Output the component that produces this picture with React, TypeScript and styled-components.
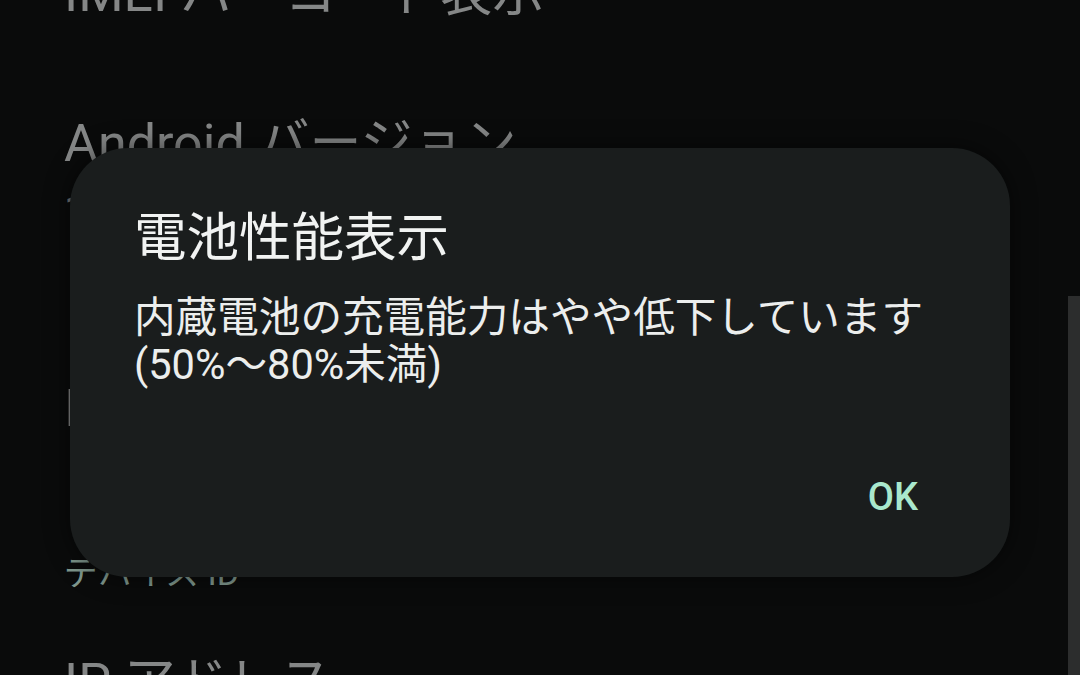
import styled, { createGlobalStyle } from 'styled-components';

const GlobalStyle = createGlobalStyle`
  html, body {
    margin: 0;
    padding: 0;
    background: #0a0b0b;
    overflow: hidden;
  }
  body {
    font-family: Roboto, "Noto Sans CJK JP", sans-serif;
  }
`;

const Screen = styled.main`
  position: relative;
  width: 1080px;
  height: 675px;
  overflow: hidden;
  background: #0a0b0b;
`;

const SettingsList = styled.section`
  display: flex;
  flex-direction: column;
  padding-left: 64px;
  margin-top: -36px;
`;

const ItemTitle = styled.div<{ $gap?: number }>`
  margin-top: ${(props) => props.$gap ?? 0}px;
  font-family: Roboto, "Noto Sans CJK JP", sans-serif;
  font-size: 52px;
  line-height: 60px;
  color: #858787;
  white-space: nowrap;
`;

const ItemValue = styled.div<{ $gap?: number }>`
  margin-top: ${(props) => props.$gap ?? 12}px;
  font-family: Roboto, "Noto Sans CJK JP", sans-serif;
  font-size: 42px;
  line-height: 50px;
  color: #6f7171;
  white-space: nowrap;
`;

const SectionHeader = styled.div<{ $gap?: number }>`
  margin-top: ${(props) => props.$gap ?? 0}px;
  font-family: Roboto, "Noto Sans CJK JP", sans-serif;
  font-size: 34px;
  line-height: 42px;
  color: #7f978d;
  white-space: nowrap;
`;

const ScrollThumb = styled.div`
  position: absolute;
  right: 0;
  top: 296px;
  width: 12px;
  height: 400px;
  background: #2c2d2d;
`;

const Dialog = styled.div`
  position: absolute;
  left: 70px;
  top: 148px;
  width: 940px;
  height: 429px;
  box-sizing: border-box;
  padding: 54px 92px 56px 64px;
  border-radius: 58px;
  background: #1a1d1d;
  box-shadow: 0 0 24px rgba(0, 0, 0, 0.55);
  display: flex;
  flex-direction: column;
`;

const DialogTitle = styled.h2`
  margin: 0;
  font-family: "Noto Sans CJK JP", sans-serif;
  font-size: 52.5px;
  font-weight: 400;
  line-height: 62px;
  color: #f1f3f2;
`;

const DialogBody = styled.p`
  margin: 30px 0 0;
  font-family: Roboto, "Noto Sans CJK JP", sans-serif;
  font-size: 41.6px;
  line-height: 47px;
  color: #eceeed;
  white-space: nowrap;
`;

const Actions = styled.div`
  margin-top: auto;
  display: flex;
  justify-content: flex-end;
`;

const TextButton = styled.button`
  border: none;
  background: none;
  padding: 0;
  font-family: Roboto, "Noto Sans", sans-serif;
  font-size: 38px;
  font-weight: 500;
  line-height: 48px;
  color: #a9e8cd;
  cursor: pointer;
`;

function App() {
  return (
    <Screen>
      <GlobalStyle />
      <SettingsList>
        <ItemTitle>IMEI バーコード表示</ItemTitle>
        <ItemTitle $gap={90}>Android バージョン</ItemTitle>
        <ItemValue>14</ItemValue>
        <ItemTitle $gap={143}>IMEI (SIM スロット 1)</ItemTitle>
        <SectionHeader $gap={113}>デバイス ID</SectionHeader>
        <ItemTitle $gap={59}>IP アドレス</ItemTitle>
      </SettingsList>
      <ScrollThumb />
      <Dialog role="dialog">
        <DialogTitle>電池性能表示</DialogTitle>
        <DialogBody>
          内蔵電池の充電能力はやや低下しています
          <br />
          (50%〜80%未満)
        </DialogBody>
        <Actions>
          <TextButton>OK</TextButton>
        </Actions>
      </Dialog>
    </Screen>
  );
}

export default App;
